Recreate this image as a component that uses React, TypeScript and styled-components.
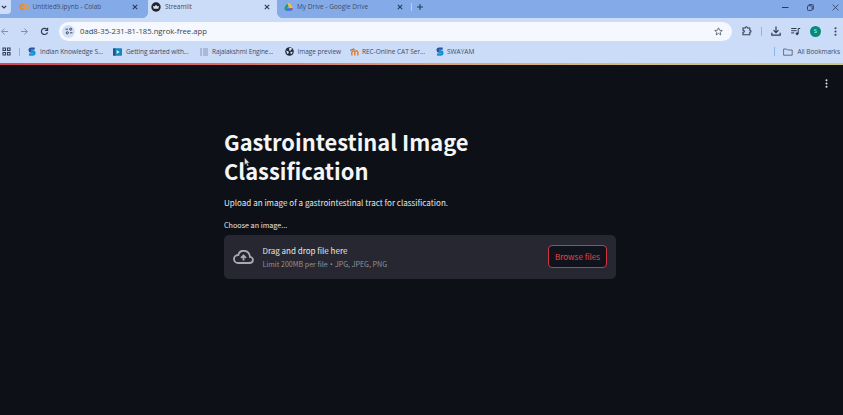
import React from "react";
import styled, { createGlobalStyle } from "styled-components";

const Global = createGlobalStyle`
  * { box-sizing: border-box; }
  html, body { margin: 0; height: 415px; overflow: hidden; background: #0d1117; }
  svg { display: block; flex: none; }
`;

const Browser = styled.div`
  width: 843px;
  height: 415px;
  overflow: hidden;
  background: #0d1117;
  font-family: "Open Sans", "Noto Sans", sans-serif;
  color: #414d65;
`;

const TabStrip = styled.div`
  height: 18px;
  background: #84abe8;
  display: flex;
  align-items: flex-start;
`;

const TabSearch = styled.div`
  width: 11px;
  height: 14px;
  border-radius: 0 0 4px 0;
  background: #cdddf8;
  padding: 4px 0 0 1px;
`;

const Tab = styled.div<{ $width: number; $active?: boolean; $inset: number; $gap: number; $end: number }>`
  width: ${(p) => p.$width}px;
  height: ${(p) => (p.$active ? 18 : 14)}px;
  padding: 0 ${(p) => p.$end}px ${(p) => (p.$active ? 4 : 0)}px ${(p) => p.$inset}px;
  background: ${(p) => (p.$active ? "#cbdcf8" : "transparent")};
  display: flex;
  align-items: center;
  gap: ${(p) => p.$gap}px;
  position: relative;
  ${(p) =>
    p.$active &&
    `
    &::before, &::after {
      content: "";
      position: absolute;
      bottom: 0;
      width: 5px;
      height: 5px;
    }
    &::before { left: -5px; background: radial-gradient(circle at 0 0, transparent 4.6px, #cbdcf8 5px); }
    &::after { right: -5px; background: radial-gradient(circle at 100% 0, transparent 4.6px, #cbdcf8 5px); }
  `}
`;

const Label = styled.span<{ $size?: number; $track?: number }>`
  font-size: ${(p) => p.$size ?? 6.5}px;
  line-height: 12px;
  letter-spacing: ${(p) => p.$track ?? 0}px;
  white-space: nowrap;
`;

const Spacer = styled.div`
  flex: 1;
`;

const Divider = styled.div<{ $height: number; $light?: boolean }>`
  width: 1px;
  height: ${(p) => p.$height}px;
  flex: none;
  background: ${(p) => (p.$light ? "#b9d0f5" : "#8db3ec")};
`;

const NewTab = styled.div`
  height: 14px;
  display: flex;
  align-items: center;
  gap: 5px;
`;

const WindowControls = styled.div`
  height: 14px;
  padding-right: 4.5px;
  display: flex;
  align-items: center;
  gap: 18px;
`;

const Toolbar = styled.div`
  height: 25px;
  background: #cbdcf8;
  display: flex;
  align-items: center;
  padding: 1px 6px 0 0;
`;

const NavButtons = styled.div`
  width: 59px;
  display: flex;
  align-items: center;
  gap: 11px;
`;

const AddressBar = styled.div`
  width: 673px;
  height: 19px;
  border-radius: 10px;
  background: #f5f8fe;
  display: flex;
  align-items: center;
  padding: 0 9px 0 3px;
  color: #3d414b;
`;

const SiteInfo = styled.div`
  width: 13px;
  height: 13px;
  border-radius: 50%;
  background: #d2e0f8;
  display: grid;
  place-items: center;
  margin-right: 5px;
`;

const ToolbarActions = styled.div`
  flex: 1;
  display: flex;
  align-items: center;
  gap: 9px;
  padding-left: 10px;
`;

const Avatar = styled.div`
  width: 11px;
  height: 11px;
  border-radius: 50%;
  background: #058b79;
  color: #d9f3ec;
  font-size: 6px;
  line-height: 11px;
  text-align: center;
  margin-right: auto;
`;

const BookmarksBar = styled.div`
  height: 20px;
  background: #cbdcf8;
  display: flex;
  align-items: center;
  padding: 0 3px 3px 2px;
`;

const Bookmark = styled.div<{ $width: number; $gap?: number }>`
  width: ${(p) => p.$width}px;
  display: flex;
  align-items: center;
  gap: ${(p) => p.$gap ?? 4}px;
`;

const AppsCell = styled.div`
  width: 26px;
  display: flex;
  align-items: center;
  gap: 8px;
`;

const AllBookmarks = styled.div`
  display: flex;
  align-items: center;
  gap: 4px;
`;

const Decoration = styled.div`
  height: 2px;
  background: linear-gradient(90deg, #d74759 0%, #dc6b64 25%, #dda072 50%, #d6bc79 75%, #cbc984 100%);
`;

const Page = styled.main`
  height: 350px;
  background: #0d1117;
  color: #f4f5f6;
  font-family: "Noto Sans CJK SC", "Noto Sans", sans-serif;
`;

const AppHeader = styled.header`
  height: 37px;
  display: flex;
  justify-content: flex-end;
  align-items: center;
  padding-right: 15px;
`;

const Content = styled.section`
  width: 392px;
  margin-left: 224px;
  padding-top: 25px;
`;

const Title = styled.h1`
  margin: 0;
  font-size: 21.85px;
  font-weight: 700;
  line-height: 29.4px;
  width: 300px;
`;

const Intro = styled.p`
  margin: 10.2px 0 0;
  font-size: 8.05px;
  line-height: 14px;
  white-space: nowrap;
  color: #e6e7e9;
`;

const FieldLabel = styled.div`
  margin-top: 10px;
  font-size: 7.2px;
  line-height: 11px;
  color: #e6e7e9;
`;

const Dropzone = styled.div`
  margin-top: 3.5px;
  height: 44px;
  border-radius: 5px;
  background: #262730;
  padding: 0 9px;
  display: flex;
  align-items: center;
`;

const DropText = styled.div`
  flex: 1;
  margin: 2px 0 0 8.4px;
  display: grid;
  gap: 1px;
`;

const DropTitle = styled.span`
  font-size: 8px;
  line-height: 13px;
  color: #e6e7e9;
`;

const DropHint = styled.span`
  font-size: 7.1px;
  line-height: 13px;
  color: #92939a;
`;

const Bullet = styled.span`
  font-family: "Open Sans", sans-serif;
  margin: 0 0.7px;
`;

const BrowseButton = styled.button`
  width: 59px;
  height: 23px;
  border: 1px solid #cf3640;
  border-radius: 4px;
  background: #10131b;
  color: #e8434c;
  font: 400 8.1px/20px "Noto Sans CJK SC", sans-serif;
  padding: 0;
  white-space: nowrap;
`;

const Pointer = styled.div`
  position: absolute;
  left: 244px;
  top: 157px;
`;

const Close = () => (
  <svg width="6" height="6" viewBox="0 0 6 6" stroke="#293b59" strokeWidth="1.1">
    <path d="M.8.8l4.4 4.4M5.2.8L.8 5.2" />
  </svg>
);

const Kebab = ({ color }: { color: string }) => (
  <svg width="3" height="9" viewBox="0 0 3 9" fill={color}>
    <circle cx="1.5" cy="1.3" r="1" />
    <circle cx="1.5" cy="4.5" r="1" />
    <circle cx="1.5" cy="7.7" r="1" />
  </svg>
);

const Swayam = () => (
  <svg width="8" height="9" viewBox="0 0 8 9" fill="none">
    <path d="M6.7 1.6H3.1Q1.6 1.6 1.6 3t1.5 1.5h1.7" stroke="#2456a4" strokeWidth="2.3" />
    <path d="M3 4.5h1.8Q6.4 4.5 6.4 6T4.8 7.5H1.1" stroke="#1293d5" strokeWidth="2.3" />
  </svg>
);

const Globe = () => (
  <svg width="9" height="9" viewBox="0 0 9 9">
    <circle cx="4.5" cy="4.5" r="4.3" fill="#202938" />
    <path d="M1.2 3.5l2.1.8.6 1.2-.9 1.6-1-.7zM4.2 1l2.1.1.9 1-1.4 1-.4 1.2-1.2-.8zM5.3 5l2.5-.2-.8 1.7-1.2.8z" fill="#d5e2f8" />
  </svg>
);

export default function App() {
  return (
    <>
      <Global />
      <Browser>
        <TabStrip>
          <TabSearch>
            <svg width="6" height="6" viewBox="0 0 6 6" fill="none" stroke="#25334c" strokeWidth="1.2">
              <path d="M.8 1.8L3 4l2.2-2.2" />
            </svg>
          </TabSearch>
          <Tab $width={137} $inset={8} $gap={3.5} $end={10}>
            <svg width="10" height="8" viewBox="0 0 10 8" fill="none" strokeWidth="1.9">
              <path d="M4.7 2.4A2.1 2.1 0 1 0 4.7 5.4" stroke="#e8892b" />
              <circle cx="7" cy="3.9" r="2" stroke="#e39a41" />
            </svg>
            <Label $track={-0.02}>Untitled9.ipynb - Colab</Label>
            <Spacer />
            <Close />
          </Tab>
          <Tab $width={129} $active $inset={3} $gap={4} $end={7}>
            <svg width="10" height="10" viewBox="0 0 10 10">
              <circle cx="5" cy="5" r="4.7" fill="#20232c" />
              <path d="M1.9 3.7l1.7.9L5 2.8l1.4 1.8 1.7-.9-.8 3.1H2.7z" fill="#dce3f0" />
            </svg>
            <Label $track={-0.08}>Streamlit</Label>
            <Spacer />
            <Close />
          </Tab>
          <Tab $width={134} $inset={7} $gap={4} $end={8}>
            <svg width="9" height="8" viewBox="0 0 9 8">
              <path d="M3.1.3L.2 5.3l1.4 2.4 3-5z" fill="#1ba35e" />
              <path d="M3.1.3h2.8l3 5H6.1z" fill="#f7c529" />
              <path d="M3 5.3h5.9L7.5 7.7H1.6z" fill="#3472df" />
              <path d="M6.1 5.3h2.8L7.5 7.7z" fill="#e94435" />
            </svg>
            <Label>My Drive - Google Drive</Label>
            <Spacer />
            <Close />
          </Tab>
          <NewTab>
            <Divider $height={8} $light />
            <svg width="6" height="6" viewBox="0 0 6 6" stroke="#293b59">
              <path d="M3 0v6M0 3h6" />
            </svg>
          </NewTab>
          <Spacer />
          <WindowControls>
            <svg width="7" height="7" viewBox="0 0 7 7" stroke="#2a3b5a">
              <path d="M0 3.5h6.5" />
            </svg>
            <svg width="7" height="7" viewBox="0 0 7 7" fill="none" stroke="#2a3b5a" strokeWidth=".9">
              <rect x=".5" y="1.8" width="4.6" height="4.6" rx=".7" />
              <path d="M2 1.6V.6h3.5q.9 0 .9.9v3.7h-1" />
            </svg>
            <svg width="7" height="7" viewBox="0 0 7 7" stroke="#2a3b5a" strokeWidth=".8">
              <path d="M.6.6l5.8 5.8M6.4.6L.6 6.4" />
            </svg>
          </WindowControls>
        </TabStrip>

        <Toolbar>
          <NavButtons>
            <svg width="9" height="9" viewBox="0 0 9 9" fill="none" stroke="#7f91ae">
              <path d="M8 4.5H1.8M4.6 1.5l-3 3 3 3" />
            </svg>
            <svg width="9" height="9" viewBox="0 0 9 9" fill="none" stroke="#7f91ae">
              <path d="M1 4.5h6.2M4.4 1.5l3 3-3 3" />
            </svg>
            <svg width="9" height="9" viewBox="0 0 9 9" fill="none" stroke="#303b50" strokeWidth="1.2">
              <path d="M7.5 5.3A3.1 3.1 0 1 1 6.9 2.4M7.6.8v2.7H4.9" />
            </svg>
          </NavButtons>
          <AddressBar>
            <SiteInfo>
              <svg width="8" height="8" viewBox="0 0 8 8" fill="none" stroke="#3c4658" strokeWidth="1">
                <path d="M.5 2.2H3M5 5.8h2.5" />
                <circle cx="5.7" cy="2.2" r="1.1" />
                <circle cx="2.3" cy="5.8" r="1.1" />
              </svg>
            </SiteInfo>
            <Label $size={7.7}>0ad8-35-231-81-185.ngrok-free.app</Label>
            <Spacer />
            <svg width="9" height="9" viewBox="0 0 10 10" fill="none" stroke="#505968" strokeWidth=".9">
              <path d="M5 .9l1.2 2.7 3 .3-2.3 2 .7 2.9L5 7.2 2.4 8.8l.7-2.9-2.3-2 3-.3z" />
            </svg>
          </AddressBar>
          <ToolbarActions>
            <svg width="10" height="10" viewBox="0 0 10 10" fill="none" stroke="#343f53" strokeWidth="1.1">
              <path d="M1 2h2.2c0-1.7 2.3-1.7 2.3 0h2.3v2.2c1.7 0 1.7 2.2 0 2.2v2.4H1V6.4c1.8 0 1.8-2.2 0-2.2z" />
            </svg>
            <Divider $height={9} />
            <svg width="10" height="10" viewBox="0 0 10 10" fill="none" stroke="#303b50" strokeWidth="1.2">
              <path d="M5 .5v6M2.5 4.2L5 6.7l2.5-2.5M.8 6.7v2.5h8.4V6.7" />
            </svg>
            <svg width="11" height="9" viewBox="-.7 0 11 9" fill="none" stroke="#303b50">
              <path d="M.5 1.5h5.3M.5 3.7h5.3M.5 5.9h3M7.5 6.6V1.5h2" />
              <circle cx="6.4" cy="6.7" r="1" fill="#303b50" />
            </svg>
            <Avatar>S</Avatar>
            <Kebab color="#35415a" />
          </ToolbarActions>
        </Toolbar>

        <BookmarksBar>
          <AppsCell>
            <svg width="9" height="9" viewBox="0 0 9 9" fill="none" stroke="#34435b" strokeWidth="1.1">
              <path d="M1 1h2.5v2.5H1zM5.5 1H8v2.5H5.5zM1 5.5h2.5V8H1zM5.5 5.5H8V8H5.5z" />
            </svg>
            <Divider $height={8} />
          </AppsCell>
          <Bookmark $width={85}>
            <Swayam />
            <Label $track={-0.08}>Indian Knowledge S...</Label>
          </Bookmark>
          <Bookmark $width={87}>
            <svg width="9" height="8" viewBox="0 0 9 8">
              <rect width="9" height="7.5" y=".2" rx=".7" fill="#1687ba" />
              <path d="M0 .5h2.5v7H0z" fill="#155b91" />
              <path d="M3.6 2l3 2-3 2z" fill="#d7f0fb" />
            </svg>
            <Label $track={-0.12}>Getting started with...</Label>
          </Bookmark>
          <Bookmark $width={85} $gap={3}>
            <svg width="9" height="8" viewBox="0 0 9 8" stroke="#8795ba">
              <path d="M0 1h2M3 1h5M0 3h2M3 3h5M0 5h2M3 5h5M0 7h2M3 7h5" />
            </svg>
            <Label $track={-0.11}>Rajalakshmi Engine...</Label>
          </Bookmark>
          <Bookmark $width={65} $gap={3.5}>
            <Globe />
            <Label $track={-0.05}>Image preview</Label>
          </Bookmark>
          <Bookmark $width={86} $gap={3}>
            <svg width="9" height="8" viewBox="0 0 9 8" fill="none" stroke="#e5863b" strokeWidth="1.6">
              <path d="M1.8 7.5V4Q3.4 1.8 4.8 4v3.5M4.8 4Q6.8 1.8 7.8 4v3.5" />
              <path d="M0 2.4L4 .8l1 1" stroke="#586175" strokeWidth=".9" />
            </svg>
            <Label $track={-0.04}>REC-Online CAT Ser...</Label>
          </Bookmark>
          <Bookmark $width={60} $gap={3}>
            <Swayam />
            <Label>SWAYAM</Label>
          </Bookmark>
          <Spacer />
          <AllBookmarks>
            <Divider $height={9} />
            <Spacer />
            <svg width="10" height="8" viewBox="0 0 10 8" fill="none" stroke="#56657e" strokeWidth=".9">
              <path d="M.6 1h3l1 1h4.6v5.2H.6z" />
            </svg>
            <Label $track={-0.06}>All Bookmarks</Label>
          </AllBookmarks>
        </BookmarksBar>
        <Decoration />

        <Page>
          <AppHeader>
            <Kebab color="#e4e5e8" />
          </AppHeader>
          <Content>
            <Title>Gastrointestinal Image Classification</Title>
            <Intro>Upload an image of a gastrointestinal tract for classification.</Intro>
            <FieldLabel>Choose an image...</FieldLabel>
            <Dropzone>
              <svg width="21" height="14" viewBox="0 0 21 14" fill="none" stroke="#a8aab8" strokeWidth="1.8">
                <path d="M5.2 13h11.2c4.4 0 4.8-5.8.5-6.1C16.2-1 6.7-.9 5.3 5-.6 5-.3 13 5.2 13z" />
                <path d="M10.5 10.5V5.8M8 7.9l2.5-2.5L13 7.9" />
              </svg>
              <DropText>
                <DropTitle>Drag and drop file here</DropTitle>
                <DropHint>
                  Limit 200MB per file <Bullet>•</Bullet> JPG, JPEG, PNG
                </DropHint>
              </DropText>
              <BrowseButton>Browse files</BrowseButton>
            </Dropzone>
          </Content>
        </Page>
        <Pointer>
          <svg width="6" height="10" viewBox="0 0 6 10">
            <path d="M.7.8v7l1.6-1.5 1 2.6 1.2-.5-1.1-2.5h2z" fill="#e9e9e9" stroke="#343944" strokeWidth=".4" />
          </svg>
        </Pointer>
      </Browser>
    </>
  );
}
